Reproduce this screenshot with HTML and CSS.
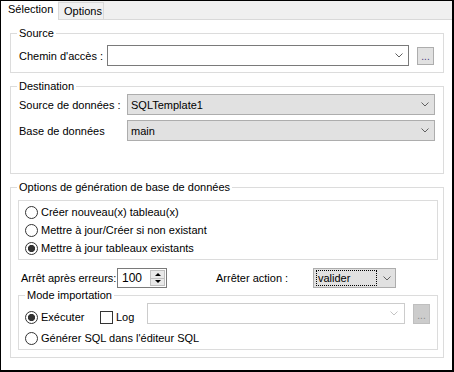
FILE: index.html
```html
<!DOCTYPE html>
<html lang="fr">
<head>
<meta charset="utf-8">
<title>Sélection</title>
<link rel="stylesheet" href="styles.css">
</head>
<body>
<div class="window">
  <div class="tabs">
    <div class="tab tab-active">Sélection</div>
    <div class="tab tab-idle">Options</div>
  </div>
  <div class="page">
    <fieldset class="group grp-source">
      <legend>Source</legend>
      <div class="source-body">
        <span class="lbl lbl-path">Chemin d'accès :</span>
        <div class="combo combo-path">
          <span class="combo-text"></span>
          <svg class="chev" width="8" height="5" viewBox="0 0 8 5"><path d="M0.5 0.5L4 4L7.5 0.5" fill="none" stroke="#606060"/></svg>
        </div>
        <div class="dots-btn">...</div>
      </div>
    </fieldset>

    <fieldset class="group grp-dest">
      <legend>Destination</legend>
      <div class="dest-body">
        <span class="lbl">Source de données :</span>
        <div class="combo combo-ro">
          <span class="combo-text">SQLTemplate1</span>
          <svg class="chev" width="8" height="5" viewBox="0 0 8 5"><path d="M0.5 0.5L4 4L7.5 0.5" fill="none" stroke="#606060"/></svg>
        </div>
        <span class="lbl">Base de données</span>
        <div class="combo combo-ro">
          <span class="combo-text">main</span>
          <svg class="chev" width="8" height="5" viewBox="0 0 8 5"><path d="M0.5 0.5L4 4L7.5 0.5" fill="none" stroke="#606060"/></svg>
        </div>
      </div>
    </fieldset>

    <fieldset class="group grp-opts">
      <legend>Options de génération de base de données</legend>
      <div class="radiobox">
        <div class="radio-row"><span class="rb"></span><span>Créer nouveau(x) tableau(x)</span></div>
        <div class="radio-row"><span class="rb"></span><span>Mettre à jour/Créer si non existant</span></div>
        <div class="radio-row"><span class="rb rb-on"></span><span>Mettre à jour tableaux existants</span></div>
      </div>

      <div class="err-row">
        <span class="lbl lbl-err">Arrêt après erreurs:</span>
        <div class="spin">
          <span class="spin-val">100</span>
          <div class="spin-btns">
            <div class="sb"><span class="tri-up"></span></div>
            <div class="sb"><span class="tri-down"></span></div>
          </div>
        </div>
        <span class="lbl lbl-stop">Arrêter action :</span>
        <div class="combo combo-ro combo-action">
          <span class="focus-rect">valider</span>
          <svg class="chev" width="8" height="5" viewBox="0 0 8 5"><path d="M0.5 0.5L4 4L7.5 0.5" fill="none" stroke="#606060"/></svg>
        </div>
      </div>

      <fieldset class="group grp-mode">
        <legend>Mode importation</legend>
        <div class="mode-row1">
          <div class="radio-item item-exec"><span class="rb rb-on"></span><span>Exécuter</span></div>
          <div class="radio-item item-log"><span class="cb"></span><span>Log</span></div>
          <div class="combo combo-disabled">
            <span class="combo-text"></span>
            <svg class="chev" width="8" height="5" viewBox="0 0 8 5"><path d="M0.5 0.5L4 4L7.5 0.5" fill="none" stroke="#c4c4c4"/></svg>
          </div>
          <div class="dots-btn dots-disabled">...</div>
        </div>
        <div class="mode-row2">
          <div class="radio-item"><span class="rb"></span><span>Générer SQL dans l'éditeur SQL</span></div>
        </div>
      </fieldset>
    </fieldset>
  </div>
</div>
</body>
</html>
```

FILE: styles.css
```css
* { box-sizing: border-box; }
html, body { margin: 0; padding: 0; background: #fff; }
body {
  font-family: "Liberation Sans", Arial, sans-serif;
  font-size: 11px;
  line-height: 14px;
  color: #000;
}
.window {
  width: 454px;
  height: 372px;
  border: 1px solid #000;
  border-right-width: 2px;
  border-bottom-width: 2px;
  display: flex;
  flex-direction: column;
  background: #fff;
}
.tabs {
  display: flex;
  align-items: flex-end;
  height: 19px;
  flex: 0 0 19px;
  background: #f0f0f0;
  border-bottom: 1px solid #d9d9d9;
}
.tab { white-space: nowrap; }
.tab-active {
  width: 57px;
  height: 19px;
  margin-bottom: -1px;
  background: #fff;
  padding: 1px 0 0 7px;
  position: relative;
}
.tab-idle {
  width: 46px;
  height: 17px;
  border: 1px solid #d9d9d9;
  border-bottom: none;
  padding: 1px 0 0 5px;
  background: #f0f0f0;
}
.page {
  flex: 1;
  padding: 6px 0 0 9px;
}
.group {
  margin: 0;
  padding: 0;
  min-width: 0;
  border: 1px solid #dcdcdc;
}
.group legend {
  padding: 0 2px;
  margin-left: 6px;
  line-height: 14px;
}
.grp-source { width: 434px; }
.source-body {
  display: flex;
  align-items: center;
  padding: 5px 9px 6px 8px;
}
.lbl { white-space: nowrap; }
.lbl-path { width: 88px; flex: 0 0 88px; }
.combo {
  display: flex;
  align-items: center;
  justify-content: space-between;
  height: 21px;
  border: 1px solid #7a7a7a;
  background: #fff;
  padding: 0 5px 0 3px;
}
.combo-path { width: 302px; flex: 0 0 302px; }
.combo-ro {
  background: #e1e1e1;
  border-color: #adadad;
}
.chev { flex: 0 0 auto; }
.dots-btn {
  width: 17px;
  height: 18px;
  margin-left: 8px;
  border: 1px solid #adadad;
  background: #e1e1e1;
  color: #4a3a7a;
  font-size: 10px;
  line-height: 10px;
  display: flex;
  align-items: flex-end;
  justify-content: center;
  padding-bottom: 2px;
}
.grp-dest { width: 434px; margin-top: 6px; }
.dest-body {
  display: grid;
  grid-template-columns: 108px 308px;
  row-gap: 5px;
  align-items: center;
  padding: 1px 0 32px 8px;
}
.grp-opts { width: 434px; margin-top: 6px; padding: 0 5px 7px 7px; }
.grp-opts > legend { margin-left: -1px; }
.radiobox {
  margin-top: 6px;
  border: 1px solid #dcdcdc;
  padding: 2px 0 2px 6px;
}
.radio-row {
  display: flex;
  align-items: center;
  height: 18px;
  gap: 3px;
}
.rb {
  width: 13px;
  height: 13px;
  flex: 0 0 13px;
  border: 1px solid #333;
  border-radius: 50%;
  background: #fff;
}
.rb-on {
  background: radial-gradient(circle, #333 0, #333 3.3px, #fff 3.9px);
}
.cb {
  width: 13px;
  height: 13px;
  flex: 0 0 13px;
  border: 1px solid #333;
  background: #fff;
}
.err-row {
  display: flex;
  align-items: center;
  height: 20px;
  margin-top: 8px;
  padding-left: 3px;
}
.lbl-err { width: 96px; flex: 0 0 96px; }
.spin {
  width: 50px;
  height: 20px;
  border: 1px solid #7a7a7a;
  display: flex;
  align-items: center;
  justify-content: space-between;
  padding: 1px;
}
.spin-val { padding-left: 3px; font-size: 12px; }
.spin-btns {
  width: 15px;
  height: 16px;
  display: flex;
  flex-direction: column;
  gap: 0;
}
.sb {
  flex: 1;
  background: #e9e9e9;
  border: 1px solid #c0c0c0;
  display: flex;
  align-items: center;
  justify-content: center;
}
.sb + .sb { border-top: none; }
.tri-up {
  width: 0; height: 0;
  border-left: 3px solid transparent;
  border-right: 3px solid transparent;
  border-bottom: 3px solid #000;
}
.tri-down {
  width: 0; height: 0;
  border-left: 3px solid transparent;
  border-right: 3px solid transparent;
  border-top: 3px solid #000;
}
.lbl-stop { width: 97px; flex: 0 0 97px; margin-left: 49px; }
.combo-action {
  width: 83px;
  height: 20px;
  padding: 0 4px 0 2px;
}
.focus-rect {
  width: 61px;
  height: 16px;
  border: 1px dotted #000;
  padding-left: 1px;
  line-height: 14px;
}
.grp-mode { width: 420px; padding: 0 0 4px 6px; }
.grp-mode > legend { margin-left: 0; }
.mode-row1 {
  display: flex;
  align-items: flex-end;
  margin-top: 1px;
}
.radio-item {
  display: flex;
  align-items: center;
  gap: 3px;
  height: 14px;
  white-space: nowrap;
}
.item-exec { width: 75px; }
.item-log { width: 47px; }
.combo-disabled {
  width: 258px;
  border-color: #cccccc;
  padding-right: 6px;
}
.dots-disabled {
  height: 20px;
  background: #cccccc;
  border-color: #bfbfbf;
  color: #8a8a8a;
}
.mode-row2 { margin-top: 7px; }
```
